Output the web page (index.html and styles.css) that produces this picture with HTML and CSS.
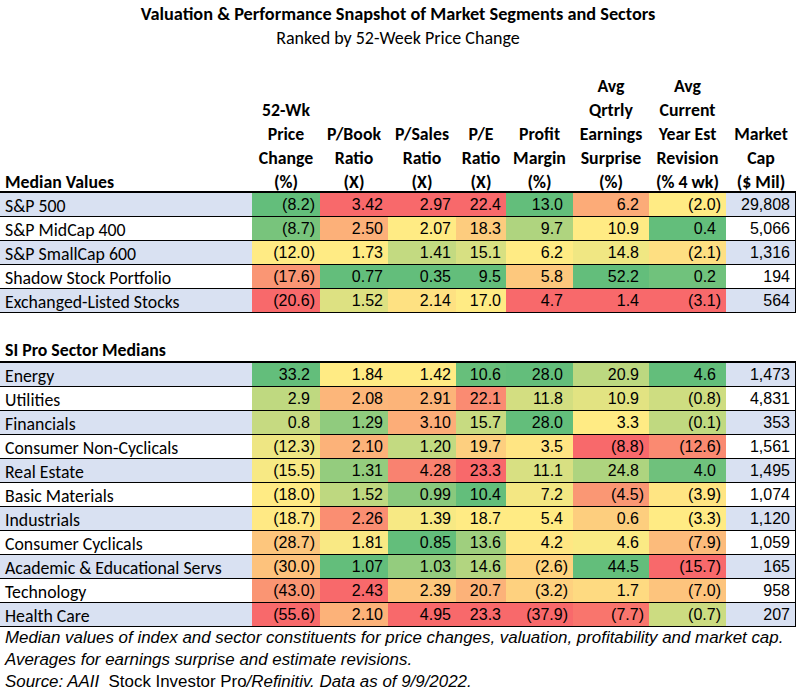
FILE: index.html
```html
<!DOCTYPE html>
<html lang="en">
<head>
<meta charset="utf-8">
<title>Valuation &amp; Performance Snapshot</title>
<link rel="stylesheet" href="styles.css">
</head>
<body>
<div class="title">Valuation &amp; Performance Snapshot of Market Segments and Sectors</div>
<div class="subtitle">Ranked by 52-Week Price Change</div>
<table class="snap">
  <colgroup>
    <col class="c-label"><col class="c68"><col class="c68"><col class="c68"><col class="c50"><col class="c67"><col class="c76"><col class="c77"><col class="c69">
  </colgroup>
  <thead>
    <tr class="head">
      <th class="hl"><div class="hd">Median Values</div></th>
      <th><div class="hd">52-Wk<br>Price<br>Change<br>(%)</div></th>
      <th><div class="hd">P/Book<br>Ratio<br>(X)</div></th>
      <th><div class="hd">P/Sales<br>Ratio<br>(X)</div></th>
      <th><div class="hd">P/E<br>Ratio<br>(X)</div></th>
      <th><div class="hd">Profit<br>Margin<br>(%)</div></th>
      <th><div class="hd">Avg<br>Qrtrly<br>Earnings<br>Surprise<br>(%)</div></th>
      <th><div class="hd">Avg<br>Current<br>Year Est<br>Revision<br>(% 4 wk)</div></th>
      <th><div class="hd">Market<br>Cap<br>($ Mil)</div></th>
    </tr>
  </thead>
  <tbody class="sec">
    <tr><td class="lb">S&amp;P 500</td><td class="n">(8.2)</td><td>3.42</td><td>2.97</td><td>22.4</td><td>13.0</td><td>6.2</td><td class="n">(2.0)</td><td class="cap">29,808</td></tr>
    <tr><td class="lb">S&amp;P MidCap 400</td><td class="n">(8.7)</td><td>2.50</td><td>2.07</td><td>18.3</td><td>9.7</td><td>10.9</td><td>0.4</td><td class="cap">5,066</td></tr>
    <tr><td class="lb">S&amp;P SmallCap 600</td><td class="n">(12.0)</td><td>1.73</td><td>1.41</td><td>15.1</td><td>6.2</td><td>14.8</td><td class="n">(2.1)</td><td class="cap">1,316</td></tr>
    <tr><td class="lb">Shadow Stock Portfolio</td><td class="n">(17.6)</td><td>0.77</td><td>0.35</td><td>9.5</td><td>5.8</td><td>52.2</td><td>0.2</td><td class="cap">194</td></tr>
    <tr><td class="lb">Exchanged-Listed Stocks</td><td class="n">(20.6)</td><td>1.52</td><td>2.14</td><td>17.0</td><td>4.7</td><td>1.4</td><td class="n">(3.1)</td><td class="cap">564</td></tr>
  </tbody>
  <tbody>
    <tr class="blank"><td colspan="9"></td></tr>
    <tr class="sechead"><td colspan="9">SI Pro Sector Medians</td></tr>
  </tbody>
  <tbody class="sec">
    <tr><td class="lb">Energy</td><td>33.2</td><td>1.84</td><td>1.42</td><td>10.6</td><td>28.0</td><td>20.9</td><td>4.6</td><td class="cap">1,473</td></tr>
    <tr><td class="lb">Utilities</td><td>2.9</td><td>2.08</td><td>2.91</td><td>22.1</td><td>11.8</td><td>10.9</td><td class="n">(0.8)</td><td class="cap">4,831</td></tr>
    <tr><td class="lb">Financials</td><td>0.8</td><td>1.29</td><td>3.10</td><td>15.7</td><td>28.0</td><td>3.3</td><td class="n">(0.1)</td><td class="cap">353</td></tr>
    <tr><td class="lb">Consumer Non-Cyclicals</td><td class="n">(12.3)</td><td>2.10</td><td>1.20</td><td>19.7</td><td>3.5</td><td class="n">(8.8)</td><td class="n">(12.6)</td><td class="cap">1,561</td></tr>
    <tr><td class="lb">Real Estate</td><td class="n">(15.5)</td><td>1.31</td><td>4.28</td><td>23.3</td><td>11.1</td><td>24.8</td><td>4.0</td><td class="cap">1,495</td></tr>
    <tr><td class="lb">Basic Materials</td><td class="n">(18.0)</td><td>1.52</td><td>0.99</td><td>10.4</td><td>7.2</td><td class="n">(4.5)</td><td class="n">(3.9)</td><td class="cap">1,074</td></tr>
    <tr><td class="lb">Industrials</td><td class="n">(18.7)</td><td>2.26</td><td>1.39</td><td>18.7</td><td>5.4</td><td>0.6</td><td class="n">(3.3)</td><td class="cap">1,120</td></tr>
    <tr><td class="lb">Consumer Cyclicals</td><td class="n">(28.7)</td><td>1.81</td><td>0.85</td><td>13.6</td><td>4.2</td><td>4.6</td><td class="n">(7.9)</td><td class="cap">1,059</td></tr>
    <tr><td class="lb">Academic &amp; Educational Servs</td><td class="n">(30.0)</td><td>1.07</td><td>1.03</td><td>14.6</td><td class="n">(2.6)</td><td>44.5</td><td class="n">(15.7)</td><td class="cap">165</td></tr>
    <tr><td class="lb">Technology</td><td class="n">(43.0)</td><td>2.43</td><td>2.39</td><td>20.7</td><td class="n">(3.2)</td><td>1.7</td><td class="n">(7.0)</td><td class="cap">958</td></tr>
    <tr><td class="lb">Health Care</td><td class="n">(55.6)</td><td>2.10</td><td>4.95</td><td>23.3</td><td class="n">(37.9)</td><td class="n">(7.7)</td><td class="n">(0.7)</td><td class="cap">207</td></tr>
  </tbody>
</table>
<div class="notes">
  <p>Median values of index and sector constituents for price changes, valuation, profitability and market cap.</p>
  <p>Averages for earnings surprise and estimate revisions.</p>
  <p>Source: AAII&nbsp; <span class="up">Stock Investor Pro</span>/Refinitiv. Data as of 9/9/2022.</p>
</div>
<script src="script.js"></script>
</body>
</html>
```

FILE: styles.css
```css
body {
  margin: 0;
  background: #ffffff;
  color: #000000;
  font-family: "Carlito", "Lato", sans-serif;
}

.title {
  text-align: center;
  font-weight: bold;
  font-size: 18.3px;
  line-height: 24px;
  padding-top: 2px;
}

.subtitle {
  text-align: center;
  font-size: 18px;
  line-height: 24px;
}

.snap {
  margin-top: 21px;
  width: 796px;
  table-layout: fixed;
  border-collapse: separate;
  border-spacing: 0;
}

.c-label { width: 252px; }
.c68 { width: 68px; }
.c50 { width: 50px; }
.c67 { width: 67px; }
.c76 { width: 76px; }
.c77 { width: 77px; }
.c69 { width: 70px; }

.head th {
  height: 120px;
  padding: 0;
  vertical-align: bottom;
  text-align: center;
  font-weight: bold;
  font-size: 17.8px;
  line-height: 24px;
  border-bottom: 2px solid #000000;
  white-space: nowrap;
}

.head .hd {
  margin-bottom: -3px;
}

.head th.hl {
  text-align: left;
  padding-left: 5px;
}

.sec td {
  height: 23px;
  padding: 0 5px;
  border-bottom: 1px solid #000000;
  font-family: "Liberation Sans", Arial, sans-serif;
  font-size: 16px;
  line-height: 23px;
  text-align: right;
  white-space: nowrap;
  overflow: hidden;
}

/* columns formatted with a trailing space for the closing paren */
.sec td:nth-child(2),
.sec td:nth-child(6),
.sec td:nth-child(7),
.sec td:nth-child(8) {
  padding-right: 10px;
}

.sec td.n {
  padding-right: 5px;
}

.sec td.lb {
  height: 20px;
  padding-top: 3px;
  line-height: 20px;
  text-align: left;
  font-family: "Carlito", "Lato", sans-serif;
  font-size: 17.8px;
}

.sec td.cap {
  border-right: 1px solid #000000;
}

.sec tr:nth-child(odd) td.lb,
.sec tr:nth-child(odd) td.cap {
  background: #d9e1f2;
}

.blank td {
  height: 24px;
  padding: 0;
}

.sechead td {
  height: 22px;
  padding: 2px 0 0 5px;
  font-weight: bold;
  font-size: 17.8px;
  line-height: 22px;
  border-bottom: 2px solid #000000;
}

.notes {
  padding-left: 5px;
  font-family: "Liberation Sans", Arial, sans-serif;
  font-style: italic;
  font-size: 16.9px;
  line-height: 22px;
}

.notes p {
  margin: 0;
  white-space: nowrap;
}

.notes .up {
  font-style: normal;
}
```

FILE: script.js
```js
(function () {
  var RED = [248, 105, 107];
  var YEL = [255, 235, 132];
  var GRN = [99, 190, 123];
  // +1: higher value is green, -1: lower value is green
  var dir = [1, -1, -1, -1, 1, 1, 1];

  function parse(t) {
    t = t.replace(/,/g, '').trim();
    var neg = t.charAt(0) === '(';
    var v = parseFloat(t.replace(/[()]/g, ''));
    return neg ? -v : v;
  }
  function pct(sorted, p) {
    var n = sorted.length;
    var r = p * (n - 1);
    var lo = Math.floor(r);
    var hi = Math.ceil(r);
    return sorted[lo] + (sorted[hi] - sorted[lo]) * (r - lo);
  }
  function mix(a, b, t) {
    return 'rgb(' + [0, 1, 2].map(function (i) {
      return Math.round(a[i] + (b[i] - a[i]) * t);
    }).join(',') + ')';
  }

  var secs = document.querySelectorAll('tbody.sec');
  Array.prototype.forEach.call(secs, function (sec) {
    var rows = sec.querySelectorAll('tr');
    for (var c = 0; c < dir.length; c++) {
      var cells = [];
      var vals = [];
      Array.prototype.forEach.call(rows, function (r) {
        var cell = r.children[c + 1];
        cells.push(cell);
        vals.push(parse(cell.textContent));
      });
      var sorted = vals.slice().sort(function (a, b) { return a - b; });
      var min = sorted[0];
      var max = sorted[sorted.length - 1];
      var mid = pct(sorted, 0.5);
      var low = dir[c] > 0 ? RED : GRN;
      var high = dir[c] > 0 ? GRN : RED;
      cells.forEach(function (cell, i) {
        var v = vals[i];
        var col;
        if (v <= mid) {
          col = mid === min ? mix(YEL, YEL, 0) : mix(low, YEL, (v - min) / (mid - min));
        } else {
          col = mix(YEL, high, (v - mid) / (max - mid));
        }
        cell.style.backgroundColor = col;
      });
    }
  });
})();
```
